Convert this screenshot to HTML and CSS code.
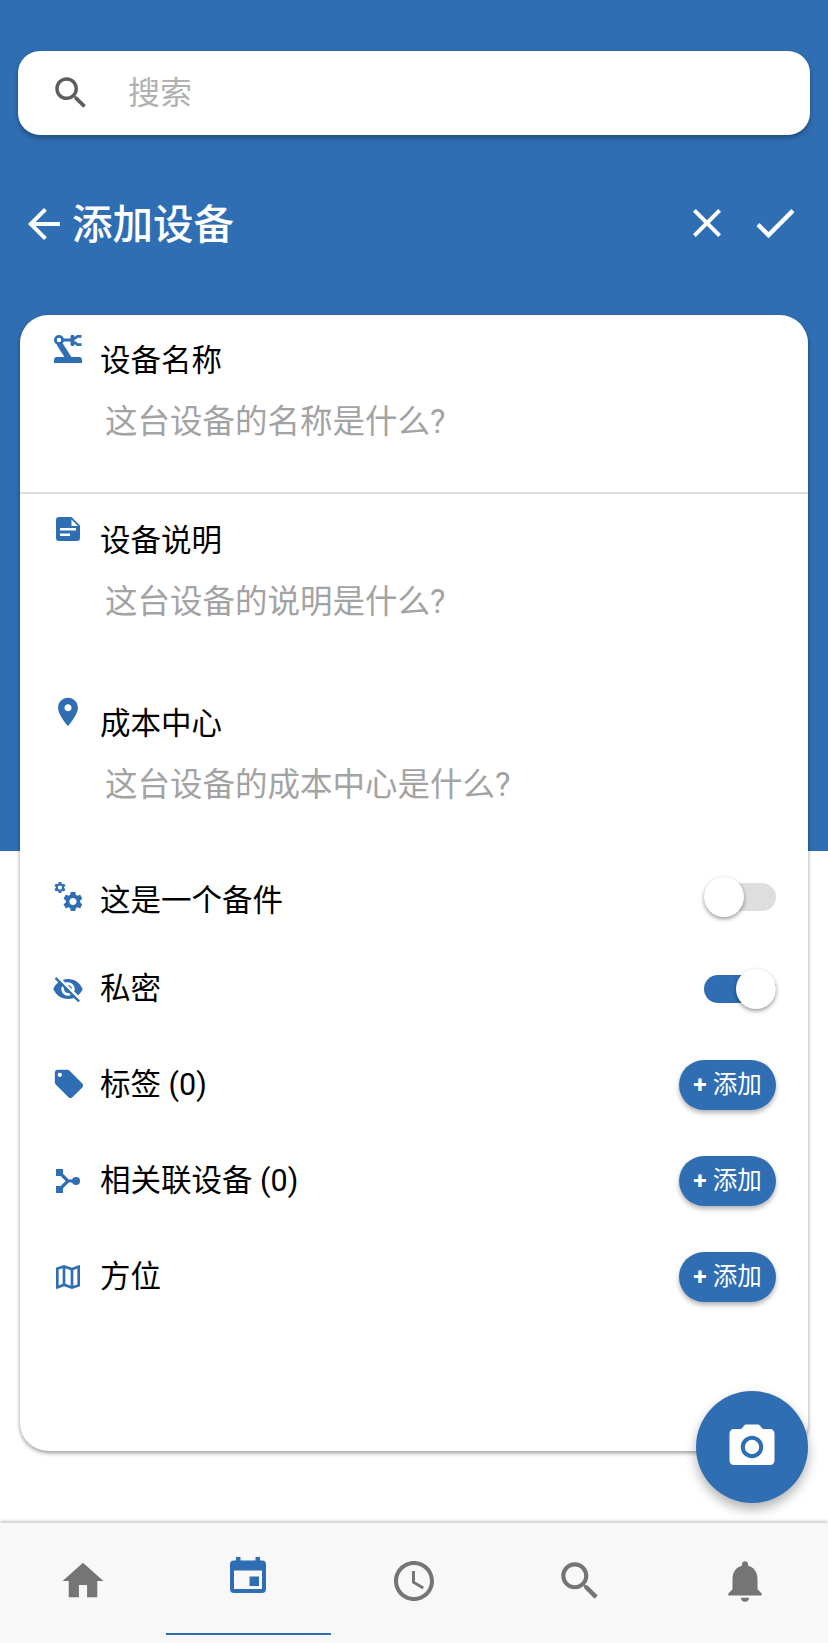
FILE: index.html
```html
<!DOCTYPE html>
<html lang="zh-CN">
<head>
<meta charset="utf-8">
<title>添加设备</title>
<link rel="stylesheet" href="styles.css">
</head>
<body>
<div class="page">
  <div class="search">
    <svg class="search-icon" viewBox="0 0 24 24"><path d="M15.5 14h-.79l-.28-.27C15.41 12.59 16 11.11 16 9.5 16 5.91 13.09 3 9.5 3S3 5.91 3 9.5 5.91 16 9.5 16c1.61 0 3.09-.59 4.23-1.57l.27.28v.79l5 4.99L20.49 19l-4.99-5zm-6 0C7.01 14 5 11.99 5 9.5S7.01 5 9.5 5 14 7.01 14 9.5 11.99 14 9.5 14z"/></svg>
    <span class="search-text">搜索</span>
  </div>
  <div class="header">
    <svg class="back" viewBox="0 0 24 24"><path d="M20 11H7.83l5.59-5.59L12 4l-8 8 8 8 1.41-1.41L7.83 13H20v-2z"/></svg>
    <h1 class="title">添加设备</h1>
    <svg class="close" viewBox="0 0 24 24"><path d="M19 6.41L17.59 5 12 10.59 6.41 5 5 6.41 10.59 12 5 17.59 6.41 19 12 13.41 17.59 19 19 17.59 13.41 12z"/></svg>
    <svg class="check" viewBox="0 0 24 24"><path d="M9 16.17L4.83 12l-1.42 1.41L9 19 21 7l-1.41-1.41z"/></svg>
  </div>
  <div class="card">
    <div class="field field-name">
      <div class="field-head">
        <span class="icon-col">
          <svg class="ic-robot" viewBox="0 0 28 28">
            <path fill-rule="evenodd" d="M5 0a5 5 0 1 1 0 10A5 5 0 0 1 5 0zm0 2.800a2.200 2.200 0 1 0 0 4.400 2.200 2.200 0 0 0 0-4.400z"/>
            <rect x="9" y="3.500" width="9" height="3"/>
            <path d="M2.500 9.500l5.500-2.300L18 23h-7z"/>
            <rect x="16.500" y="0" width="4" height="11" rx="1.400"/>
            <path class="claw" d="M20 4l3.500-2.600h4M20 7l3.500 2.600h4"/>
            <path d="M3 22h22a3 3 0 0 1 3 3v3H0v-3a3 3 0 0 1 3-3z"/>
          </svg>
        </span>
        <span class="label">设备名称</span>
      </div>
      <div class="placeholder">这台设备的名称是什么?</div>
    </div>
    <div class="field field-desc">
      <div class="field-head">
        <span class="icon-col">
          <svg class="ic-doc" viewBox="0 0 24 24"><path fill-rule="evenodd" d="M3 0h12.500L24 8.500V21a3 3 0 0 1-3 3H3a3 3 0 0 1-3-3V3a3 3 0 0 1 3-3zm12.500 2.500V9H22zM4 11v2.500h16V11zm0 5.500V19h10v-2.500z"/></svg>
        </span>
        <span class="label">设备说明</span>
      </div>
      <div class="placeholder">这台设备的说明是什么?</div>
    </div>
    <div class="field field-cost">
      <div class="field-head">
        <span class="icon-col">
          <svg class="ic-place" viewBox="0 0 24 24"><path d="M12 2C8.130 2 5 5.130 5 9c0 5.250 7 13 7 13s7-7.750 7-13c0-3.870-3.130-7-7-7zm0 9.500c-1.380 0-2.500-1.120-2.500-2.500s1.120-2.500 2.500-2.500 2.500 1.120 2.500 2.500-1.120 2.500-2.500 2.500z"/></svg>
        </span>
        <span class="label">成本中心</span>
      </div>
      <div class="placeholder">这台设备的成本中心是什么?</div>
    </div>
    <div class="row row-toggle row-first">
      <span class="icon-col row-icon">
        <svg class="ic-gears" viewBox="0 0 28 29">
          <g transform="translate(-1 -1.450) scale(.58)"><path d="M19.140 12.940c.04-.3.06-.61.06-.94 0-.32-.02-.64-.07-.94l2.030-1.580c.18-.14.23-.41.12-.61l-1.920-3.320c-.12-.22-.37-.29-.59-.22l-2.390.96c-.5-.38-1.030-.7-1.620-.94l-.36-2.540c-.04-.24-.24-.41-.48-.41h-3.840c-.24 0-.43.17-.47.41l-.36 2.540c-.59.24-1.130.57-1.620.94l-2.390-.96c-.22-.08-.47 0-.59.22L2.740 8.870c-.12.21-.08.47.12.61l2.030 1.580c-.05.3-.09.63-.09.94s.02.64.07.94l-2.030 1.580c-.18.14-.23.41-.12.61l1.920 3.320c.12.22.37.29.59.22l2.390-.96c.5.38 1.030.7 1.620.94l.36 2.540c.05.24.24.41.48.41h3.840c.24 0 .44-.17.47-.41l.36-2.540c.59-.24 1.130-.56 1.620-.94l2.390.96c.22.08.47 0 .59-.22l1.920-3.320c.12-.22.07-.47-.12-.61l-2.010-1.580zM12 15.600c-1.980 0-3.600-1.620-3.600-3.600s1.620-3.600 3.600-3.600 3.600 1.620 3.600 3.600-1.620 3.600-3.600 3.600z"/></g>
          <g transform="translate(7 7.500)"><path d="M19.140 12.940c.04-.3.06-.61.06-.94 0-.32-.02-.64-.07-.94l2.030-1.580c.18-.14.23-.41.12-.61l-1.920-3.320c-.12-.22-.37-.29-.59-.22l-2.390.96c-.5-.38-1.030-.7-1.620-.94l-.36-2.540c-.04-.24-.24-.41-.48-.41h-3.840c-.24 0-.43.17-.47.41l-.36 2.540c-.59.24-1.130.57-1.620.94l-2.390-.96c-.22-.08-.47 0-.59.22L2.740 8.870c-.12.21-.08.47.12.61l2.030 1.580c-.05.3-.09.63-.09.94s.02.64.07.94l-2.030 1.580c-.18.14-.23.41-.12.61l1.920 3.320c.12.22.37.29.59.22l2.390-.96c.5.38 1.030.7 1.620.94l.36 2.540c.05.24.24.41.48.41h3.840c.24 0 .44-.17.47-.41l.36-2.540c.59-.24 1.130-.56 1.620-.94l2.390.96c.22.08.47 0 .59-.22l1.920-3.320c.12-.22.07-.47-.12-.61l-2.010-1.580zM12 15.600c-1.980 0-3.600-1.620-3.600-3.600s1.620-3.600 3.600-3.600 3.600 1.620 3.600 3.600-1.620 3.600-3.600 3.600z"/></g>
        </svg>
      </span>
      <span class="label">这是一个备件</span>
      <span class="toggle"><span class="thumb"></span></span>
    </div>
    <div class="row row-toggle">
      <span class="icon-col row-icon">
        <svg class="ic-eye" viewBox="0 0 24 24"><path d="M12 7c2.760 0 5 2.240 5 5 0 .65-.13 1.260-.36 1.830l2.920 2.920c1.510-1.260 2.700-2.890 3.430-4.750-1.730-4.390-6-7.500-11-7.500-1.400 0-2.740.25-3.980.7l2.160 2.160C10.740 7.130 11.350 7 12 7zM2 4.270l2.280 2.280.46.46C3.080 8.300 1.780 10.020 1 12c1.730 4.390 6 7.500 11 7.500 1.550 0 3.030-.3 4.380-.84l.42.42L19.730 22 21 20.730 3.270 3 2 4.270zM7.530 9.800l1.550 1.550c-.05.21-.08.43-.08.65 0 1.660 1.340 3 3 3 .22 0 .44-.03.65-.08l1.550 1.550c-.67.33-1.410.53-2.200.53-2.760 0-5-2.240-5-5 0-.79.2-1.530.53-2.200zm4.310-.78l3.150 3.150.02-.16c0-1.660-1.340-3-3-3l-.17.01z"/></svg>
      </span>
      <span class="label">私密</span>
      <span class="toggle toggle-on"><span class="thumb"></span></span>
    </div>
    <div class="add-list">
      <div class="row">
        <span class="icon-col row-icon">
          <svg class="ic-tag" viewBox="0 0 24 24"><path d="M21.410 11.580l-9-9C12.050 2.220 11.550 2 11 2H4c-1.100 0-2 .9-2 2v7c0 .55.22 1.050.59 1.420l9 9c.36.36.86.58 1.410.58.55 0 1.050-.22 1.410-.59l7-7c.37-.36.59-.86.59-1.410 0-.55-.23-1.060-.59-1.420zM5.500 7C4.670 7 4 6.330 4 5.500S4.670 4 5.500 4 7 4.670 7 5.500 6.330 7 5.500 7z"/></svg>
        </span>
        <span class="label">标签 (0)</span>
        <span class="add-btn"><span class="plus">+</span> 添加</span>
      </div>
      <div class="row">
        <span class="icon-col row-icon">
          <svg class="ic-share" viewBox="0 0 24 24"><path d="M0 0h7v7H0zM0 17h7v7H0z"/><circle cx="20" cy="12" r="4"/><path class="share-line" d="M4 4l8 8-8 8M12 12h8"/></svg>
        </span>
        <span class="label">相关联设备 (0)</span>
        <span class="add-btn"><span class="plus">+</span> 添加</span>
      </div>
      <div class="row">
        <span class="icon-col row-icon">
          <svg class="ic-map" viewBox="0 0 24 24"><path d="M20.500 3l-.16.03L15 5.100 9 3 3.360 4.900c-.21.07-.36.25-.36.48V20.500c0 .28.22.5.5.5l.16-.03L9 18.900l6 2.100 5.640-1.900c.21-.07.36-.25.36-.48V3.500c0-.28-.22-.5-.5-.5zM10 5.470l4 1.400v11.660l-4-1.400V5.470zm-5 .99l3-1.010v11.700l-3 1.160V6.460zm14 11.080l-3 1.010V6.860l3-1.160v11.840z"/></svg>
        </span>
        <span class="label">方位</span>
        <span class="add-btn"><span class="plus">+</span> 添加</span>
      </div>
    </div>
  </div>
  <div class="fab">
    <svg class="fab-icon" viewBox="0 0 24 24"><circle cx="12" cy="12" r="3.200"/><path d="M9 2L7.170 4H4c-1.100 0-2 .9-2 2v12c0 1.100.9 2 2 2h16c1.100 0 2-.9 2-2V6c0-1.100-.9-2-2-2h-3.170L15 2H9zm3 15c-2.760 0-5-2.240-5-5s2.240-5 5-5 5 2.240 5 5-2.240 5-5 5z"/></svg>
  </div>
  <nav class="nav">
    <div class="nav-item">
      <svg class="nav-icon" viewBox="-.25 -.25 24.500 24.500"><path d="M10 20v-6h4v6h5v-8h3L12 3 2 12h3v8z"/></svg>
    </div>
    <div class="nav-item nav-active">
      <svg class="nav-cal" viewBox="0 0 36 36"><path fill-rule="evenodd" d="M6 0h4.500v3.500h15V0H30v3.500h2a4 4 0 0 1 4 4V32a4 4 0 0 1-4 4H4a4 4 0 0 1-4-4V7.500a4 4 0 0 1 4-4h2zM4 13.500V32h28V13.500z"/><rect x="19.500" y="19.500" width="9.500" height="9.500"/></svg>
      <span class="nav-underline"></span>
    </div>
    <div class="nav-item">
      <svg class="nav-icon" viewBox="-.5 -.5 25 25"><path d="M11.990 2C6.470 2 2 6.480 2 12s4.470 10 9.990 10C17.520 22 22 17.520 22 12S17.520 2 11.990 2zM12 20c-4.420 0-8-3.580-8-8s3.580-8 8-8 8 3.580 8 8-3.580 8-8 8zm.5-13H11v6l5.250 3.150.75-1.230-4.500-2.670z"/></svg>
    </div>
    <div class="nav-item">
      <svg class="nav-icon" viewBox="0 0 24 24"><path d="M15.500 14h-.79l-.28-.27C15.410 12.590 16 11.110 16 9.500 16 5.910 13.090 3 9.500 3S3 5.910 3 9.500 5.910 16 9.500 16c1.610 0 3.090-.59 4.230-1.570l.27.28v.79l5 4.990L20.490 19l-4.990-5zm-6 0C7.010 14 5 11.990 5 9.500S7.010 5 9.500 5 14 7.010 14 9.500 11.990 14 9.500 14z"/></svg>
    </div>
    <div class="nav-item">
      <svg class="nav-icon" viewBox="0 0 24 24"><path d="M12 22c1.100 0 2-.9 2-2h-4c0 1.100.89 2 2 2zm6-6v-5c0-3.070-1.640-5.640-4.500-6.320V4c0-.83-.67-1.500-1.500-1.500s-1.500.67-1.500 1.500v.68C7.630 5.360 6 7.920 6 11v5l-2 2v1h16v-1l-2-2z"/></svg>
    </div>
  </nav>
</div>
</body>
</html>
```

FILE: styles.css
```css
* { box-sizing: border-box; }

html, body { margin: 0; padding: 0; }

body {
  font-family: Roboto, "Noto Sans CJK SC", sans-serif;
  color: #000;
}

.page {
  position: relative;
  width: 828px;
  height: 1643px;
  overflow: hidden;
  display: flex;
  flex-direction: column;
  padding-top: 51px;
  background: linear-gradient(#2f6eb3 851px, #fff 851px);
}

svg { display: block; flex: none; }

.search {
  height: 84px;
  margin: 0 18px;
  background: #fff;
  border-radius: 22px;
  box-shadow: 0 3px 5px rgba(0, 0, 0, .3);
  display: flex;
  align-items: center;
  padding-left: 32px;
}

.search-icon { width: 42px; height: 42px; fill: #5c5c5c; }

.search-text {
  margin-left: 36px;
  font-size: 32px;
  line-height: 44px;
  color: #b1b1b1;
}

.header {
  height: 64px;
  margin-top: 58px;
  margin-bottom: 58px;
  padding: 0 27px 0 20px;
  display: flex;
  align-items: center;
  fill: #fff;
}

.back { width: 48px; height: 48px; margin-bottom: 3px; }

.title {
  margin: 0 auto 0 4px;
  font-size: 40.500px;
  font-weight: 500;
  line-height: 64px;
  color: #fff;
}

.close { width: 48px; height: 48px; margin-right: 18px; margin-bottom: 4px; }
.check { width: 52px; height: 52px; margin-bottom: 4px; }

.card {
  margin: 0 20px;
  height: 1136px;
  background: #fff;
  border-radius: 28px;
  box-shadow: 0 2px 4px rgba(0, 0, 0, .4);
  flex: none;
}

.field { padding-top: 27px; }

.field-name { height: 179px; padding-top: 26px; border-bottom: 2px solid #ddd; }
.field-desc { height: 183px; }
.field-cost { height: 178px; }

.field-head { display: flex; }

.icon-col {
  width: 48px;
  margin-left: 24px;
  margin-right: 8px;
  height: 36px;
  margin-top: -10px;
  display: flex;
  align-items: center;
  justify-content: center;
  flex: none;
  fill: #2f6eb3;
}

.label {
  font-size: 30.500px;
  line-height: 40px;
}

.placeholder {
  margin: 19px 0 0 81px;
  padding-left: 4px;
  font-size: 32.500px;
  line-height: 44px;
  color: #a3a3a3;
}

.row {
  height: 96px;
  display: flex;
  align-items: center;
}

.row-toggle { height: 89px; }

.row-first .label { margin-top: 2px; }
.row-first .toggle { margin-bottom: 6px; }
.row-first .row-icon { margin-bottom: 6px; }

.row-icon { margin-top: 0; }

.add-list { margin-top: 4px; }

.row .label { flex: 1; }

.ic-robot { width: 28px; height: 28px; }
.claw { fill: none; stroke: #2f6eb3; stroke-width: 2.800; }
.ic-doc { width: 24px; height: 24px; }
.ic-place { width: 34px; height: 34px; }
.ic-gears { width: 28px; height: 29px; }
.ic-eye { width: 32px; height: 32px; }
.ic-tag { width: 34px; height: 34px; margin: 0 0 2px 2px; }
.ic-share { width: 24px; height: 24px; }
.share-line { fill: none; stroke: #2f6eb3; stroke-width: 3.200; }
.ic-map { width: 32px; height: 32px; }

.toggle {
  position: relative;
  width: 72px;
  height: 28px;
  margin-right: 32px;
  border-radius: 14px;
  background: #dedede;
}

.toggle-on { background: #2f6eb3; }

.thumb {
  position: absolute;
  left: 0;
  top: -6px;
  width: 40px;
  height: 40px;
  border-radius: 50%;
  background: #fff;
  box-shadow: 0 2px 4px rgba(0, 0, 0, .4);
}

.toggle-on .thumb { left: 32px; }

.add-btn {
  width: 97px;
  height: 50px;
  margin-right: 32px;
  border-radius: 25px;
  background: #2f6eb3;
  box-shadow: 0 3px 5px rgba(0, 0, 0, .3);
  color: #fff;
  font-size: 24.500px;
  line-height: 50px;
  text-align: center;
  white-space: nowrap;
}

.plus { font-weight: 700; }

.fab {
  position: absolute;
  right: 20px;
  bottom: 140px;
  width: 112px;
  height: 112px;
  border-radius: 50%;
  background: #2f6eb3;
  box-shadow: 0 6px 12px rgba(0, 0, 0, .3);
  display: flex;
  align-items: center;
  justify-content: center;
  fill: #fff;
}

.fab-icon { width: 54px; height: 54px; }

.nav {
  margin-top: auto;
  height: 120px;
  background: #f8f8f8;
  box-shadow: 0 -2px 3px rgba(0, 0, 0, .2);
  display: flex;
  fill: #757575;
}

.nav-item {
  flex: 1;
  display: flex;
  flex-direction: column;
  align-items: center;
  padding-top: 33px;
}

.nav-icon { width: 50px; height: 50px; }

.nav-active { fill: #2f6eb3; padding-top: 34px; }

.nav-cal { width: 36px; height: 36px; }

.nav-underline {
  width: 100%;
  height: 2px;
  margin-top: 40px;
  background: #2f6eb3;
}
```
